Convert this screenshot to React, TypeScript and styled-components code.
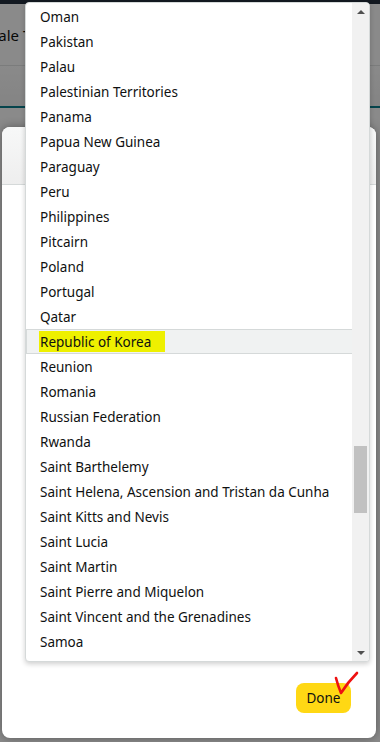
import React from "react";
import styled, { createGlobalStyle } from "styled-components";

const GlobalStyle = createGlobalStyle`
  html, body {
    margin: 0;
    padding: 0;
  }
  body {
    font-family: "Noto Sans", "Liberation Sans", Arial, sans-serif;
    color: #0f1111;
  }
`;

const countries = [
  "Oman",
  "Pakistan",
  "Palau",
  "Palestinian Territories",
  "Panama",
  "Papua New Guinea",
  "Paraguay",
  "Peru",
  "Philippines",
  "Pitcairn",
  "Poland",
  "Portugal",
  "Qatar",
  "Republic of Korea",
  "Reunion",
  "Romania",
  "Russian Federation",
  "Rwanda",
  "Saint Barthelemy",
  "Saint Helena, Ascension and Tristan da Cunha",
  "Saint Kitts and Nevis",
  "Saint Lucia",
  "Saint Martin",
  "Saint Pierre and Miquelon",
  "Saint Vincent and the Grenadines",
  "Samoa",
];

const selected = "Republic of Korea";

const Screen = styled.div`
  position: relative;
  width: 380px;
  height: 742px;
  overflow: hidden;
  background: #ffffff;
`;

/* page behind the modal */
const TopBar = styled.div`
  height: 4px;
  background: #232f3e;
`;

const PageHeader = styled.div`
  height: 61px;
  display: flex;
  align-items: center;
  border-bottom: 1px solid #e3e6e6;
  font-size: 15px;
  text-indent: -10px;
  white-space: nowrap;
  overflow: hidden;
`;

const Tabs = styled.div`
  height: 40px;
  background: linear-gradient(#ffffff, #f3f3f3);
  border-bottom: 2px solid #0a7e8c;
`;

const Dim = styled.div`
  position: absolute;
  inset: 0;
  background: rgba(0, 0, 0, 0.46);
`;

/* modal */
const Modal = styled.div`
  position: absolute;
  left: 2px;
  top: 127px;
  width: 374px;
  height: 611px;
  display: flex;
  flex-direction: column;
  background: #ffffff;
  border-radius: 8px;
  box-shadow: 0 0 10px rgba(0, 0, 0, 0.35);
  overflow: hidden;
`;

const ModalHeader = styled.div`
  height: 57px;
  flex-shrink: 0;
  background: linear-gradient(#f7f8f8, #eeeeee);
  border-bottom: 1px solid #d5d9d9;
`;

const ModalBody = styled.div`
  flex: 1;
`;

const ModalFooter = styled.div`
  display: flex;
  justify-content: flex-end;
  padding: 0 25px 25px;
`;

const DoneButton = styled.button`
  width: 55px;
  height: 30px;
  border: none;
  border-radius: 8px;
  background: #ffd814;
  font-family: inherit;
  font-size: 13.5px;
  color: #0f1111;
  padding: 0;
`;

const CheckMark = styled.svg`
  position: absolute;
  left: 330px;
  top: 666px;
  width: 34px;
  height: 34px;
  overflow: visible;
`;

/* dropdown list */
const Dropdown = styled.div`
  position: absolute;
  left: 25px;
  top: 2px;
  width: 345px;
  height: 660px;
  box-sizing: border-box;
  display: flex;
  background: #ffffff;
  border: 1px solid #d5d9d9;
  border-radius: 4px;
  box-shadow: 0 2px 5px rgba(15, 17, 17, 0.2);
  overflow: hidden;
`;

const Options = styled.ul`
  flex: 1;
  list-style: none;
  margin: 0;
  padding: 1px 0 0;
  overflow: hidden;
`;

const Option = styled.li<{ $active?: boolean }>`
  height: 23px;
  line-height: 25px;
  padding-left: 13px;
  font-size: 13.5px;
  white-space: nowrap;
  border: 1px solid ${({ $active }) => ($active ? "#d5d9d9" : "transparent")};
  border-right: none;
  background: ${({ $active }) => ($active ? "#f0f2f2" : "transparent")};
`;

const Marker = styled.span`
  background: #eef000;
  padding: 2px 14px 1px 1px;
  margin-left: -1px;
`;

const Scrollbar = styled.div`
  width: 17px;
  flex-shrink: 0;
  display: flex;
  flex-direction: column;
  background: #f1f1f1;
`;

const Arrow = styled.div<{ $down?: boolean }>`
  height: 17px;
  display: flex;
  align-items: center;
  justify-content: center;

  &::before {
    content: "";
    border-left: 4px solid transparent;
    border-right: 4px solid transparent;
    ${({ $down }) =>
      $down ? "border-top: 4px solid #505050;" : "border-bottom: 4px solid #505050;"}
  }
`;

const Track = styled.div`
  flex: 1;
  padding: 0 2px;
`;

const Thumb = styled.div<{ $offset: number; $size: number }>`
  margin-top: ${({ $offset }) => $offset}px;
  height: ${({ $size }) => $size}px;
  background: #c1c1c1;
`;

export default function App() {
  return (
    <Screen>
      <GlobalStyle />
      <TopBar />
      <PageHeader>Sale Tax Exemption</PageHeader>
      <Tabs />
      <Dim />

      <Modal>
        <ModalHeader />
        <ModalBody />
        <ModalFooter>
          <DoneButton>Done</DoneButton>
        </ModalFooter>
      </Modal>

      <CheckMark viewBox="0 0 34 34">
        <path
          d="M6 12 Q8 20 11 27 Q18 16 27 7"
          fill="none"
          stroke="#ee1111"
          strokeWidth="2.6"
          strokeLinecap="round"
          strokeLinejoin="round"
        />
      </CheckMark>

      <Dropdown>
        <Options>
          {countries.map((name) => (
            <Option key={name} $active={name === selected}>
              {name === selected ? <Marker>{name}</Marker> : name}
            </Option>
          ))}
        </Options>
        <Scrollbar>
          <Arrow />
          <Track>
            <Thumb $offset={426} $size={67} />
          </Track>
          <Arrow $down />
        </Scrollbar>
      </Dropdown>
    </Screen>
  );
}
